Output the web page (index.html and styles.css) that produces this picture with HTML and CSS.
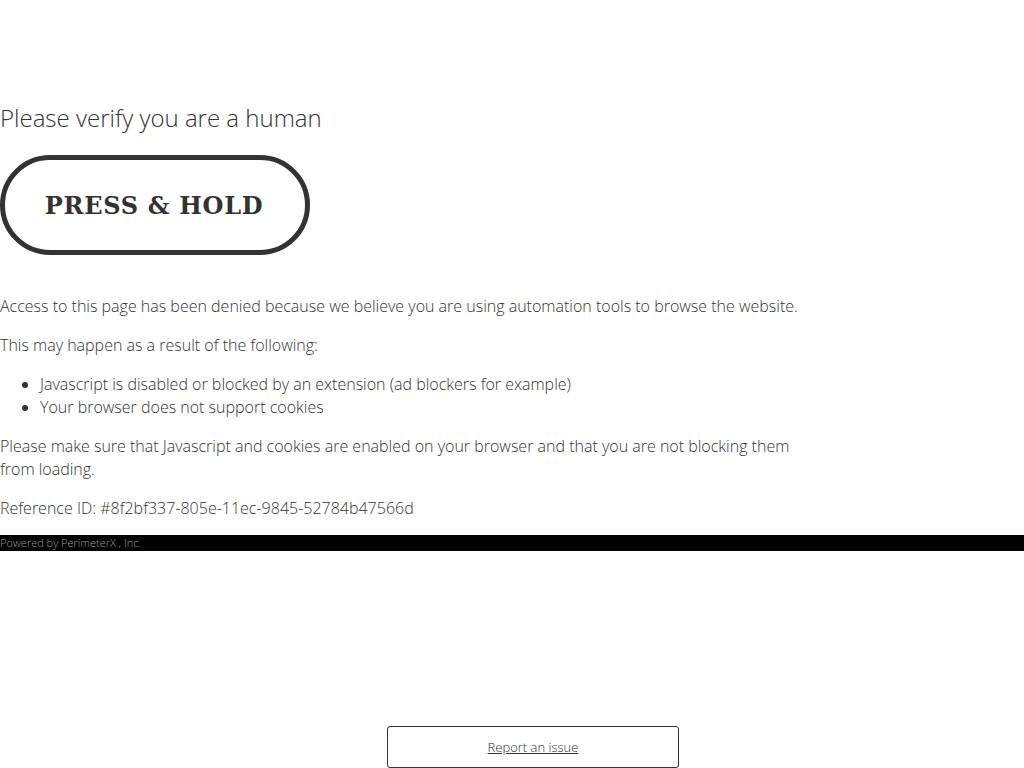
FILE: index.html
```html
<!DOCTYPE html>
<html>
<head>
<meta charset="utf-8">
<title>Access to this page has been denied</title>
<link rel="stylesheet" href="styles.css">
</head>
<body>
<div class="container">
  <h1 class="title">Please verify you are a human</h1>
  <div class="hold-btn">PRESS &amp; HOLD</div>
  <div class="content">
    <p>Access to this page has been denied because we believe you are using automation tools to browse the website.</p>
    <p>This may happen as a result of the following:</p>
    <ul>
      <li>Javascript is disabled or blocked by an extension (ad blockers for example)</li>
      <li>Your browser does not support cookies</li>
    </ul>
    <p>Please make sure that Javascript and cookies are enabled on your browser and that you are not blocking them from loading.</p>
    <p>Reference ID: #8f2bf337-805e-11ec-9845-52784b47566d</p>
  </div>
</div>
<div class="powered">Powered by <span>PerimeterX</span> , Inc.</div>
<div class="report"><a href="#">Report an issue</a></div>
</body>
</html>
```

FILE: styles.css
```css
html, body {
  margin: 0;
  padding: 0;
  background: #fff;
}
body {
  font-family: "Open Sans", "DejaVu Sans", sans-serif;
  font-weight: 300;
  color: #333;
  font-size: 16px;
  line-height: 23px;
}
.container {
  padding-top: 101px;
  width: 810px;
}
.title {
  margin: 0;
  font-size: 24px;
  line-height: 34px;
  font-weight: 300;
  color: #333;
}
.hold-btn {
  margin-top: 20px;
  margin-bottom: 40px;
  width: 310px;
  height: 100px;
  box-sizing: border-box;
  border: 5px solid #333;
  border-radius: 50px;
  display: flex;
  align-items: center;
  justify-content: center;
  font-family: "DejaVu Serif", serif;
  font-weight: bold;
  font-size: 24px;
  color: #333;
  letter-spacing: 0.7px;
  padding-right: 2px;
}
.content p {
  margin: 16px 0;
}
.content ul {
  margin: 16px 0;
  padding-left: 40px;
}
.powered {
  background: #000;
  color: #999;
  font-size: 11px;
  line-height: 16px;
  height: 16px;
  margin-top: -1px;
}
.report {
  position: fixed;
  bottom: 0;
  left: 50%;
  margin-left: -125px;
  width: 290px;
  height: 40px;
  border: 1px solid #333;
  border-radius: 3px;
  background: #fff;
  display: flex;
  align-items: center;
  justify-content: center;
  font-size: 13px;
}
.report a {
  color: #333;
  font-weight: 300;
  text-decoration: underline;
}
```
